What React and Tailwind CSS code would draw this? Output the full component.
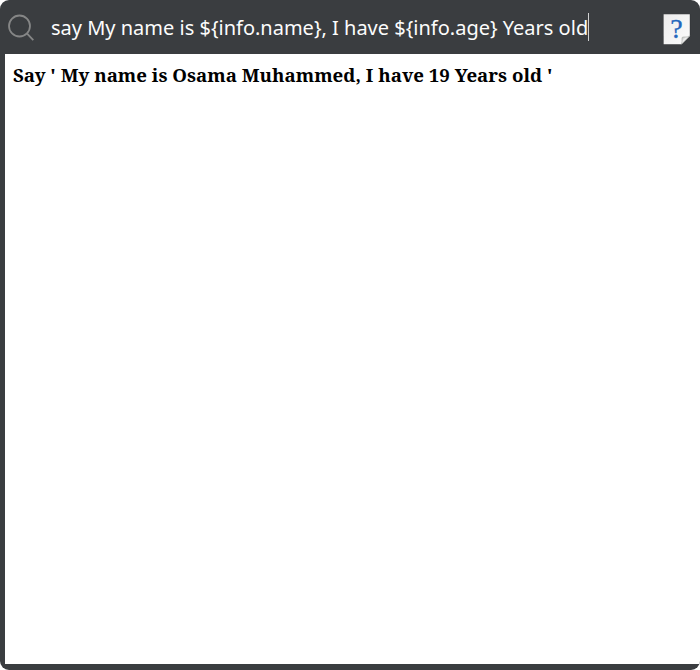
function SearchIcon() {
  return (
    <svg className="block h-7 w-7 shrink-0" viewBox="0 0 28 28" fill="none" stroke="#858686" strokeWidth="1.8">
      <circle cx="11.5" cy="13" r="10.5" />
      <path d="M18.9 20.4 25.3 27.2" />
    </svg>
  );
}

function HelpIcon() {
  return (
    <svg className="block h-8 w-7 shrink-0" viewBox="0 0 28 32">
      <defs>
        <linearGradient id="paper" x1="0" y1="0" x2="1" y2="1">
          <stop offset="0" stopColor="#ececec" />
          <stop offset="1" stopColor="#fbfbfb" />
        </linearGradient>
        <linearGradient id="fold" x1="0" y1="0" x2="1" y2="1">
          <stop offset="0" stopColor="#a9aca8" />
          <stop offset="0.45" stopColor="#f4f4f4" />
          <stop offset="1" stopColor="#b5b7b5" />
        </linearGradient>
      </defs>
      <path d="M0.5 1H27.3V23.5L18.8 31.6H0.5Z" fill="#303335" />
      <path d="M0.6 1.2H26.8V23L18.6 31.2H0.6Z" fill="url(#paper)" />
      <path d="M18.3 31.3Q19.4 29 19 25Q19.1 23.8 20.8 24Q24.8 24.5 26.8 22.8Z" fill="url(#fold)" stroke="#a5a7a5" strokeWidth="0.6" />
      <text x="7.3" y="25.2" fontSize="28" fill="#2266bd" stroke="#2266bd" strokeWidth="0.3" className="font-['Liberation_Serif',serif]">?</text>
    </svg>
  );
}

export default function App() {
  return (
    <div className="h-[670px] w-[700px] bg-white">
      <div className="flex h-full flex-col overflow-hidden rounded-[9px] bg-[#3a3d40] pb-[6px]">
        <header className="flex h-[54px] shrink-0 items-center pr-[9px] pl-2">
          <SearchIcon />
          <div className="ml-[15px] flex flex-1 items-center">
            <span className="whitespace-pre pt-0.5 font-['Noto_Sans',sans-serif] text-[20px] leading-7 text-[#fcfcfc]">
              {"say My name is ${info.name}, I have ${info.age} Years old"}
            </span>
            <span className="h-7 w-px bg-[#d0d1d1]" />
          </div>
          <div className="pt-1">
            <HelpIcon />
          </div>
        </header>
        <main className="ml-[5px] flex-1 bg-white pt-[9px] pl-2">
          <p className="whitespace-pre font-['Noto_Serif','DejaVu_Serif',serif] text-[18.72px] leading-6 font-bold text-black">
            Say ' My name is Osama Muhammed, I have 19 Years old '
          </p>
        </main>
      </div>
    </div>
  );
}
